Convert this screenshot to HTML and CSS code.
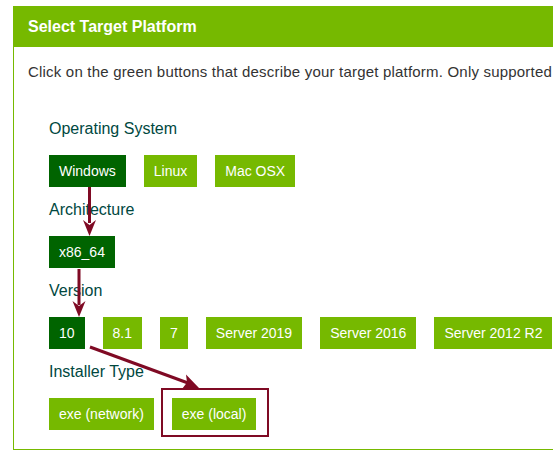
FILE: index.html
```html
<!DOCTYPE html>
<html lang="en">
<head>
<meta charset="utf-8">
<title>Select Target Platform</title>
<link rel="stylesheet" href="styles.css">
</head>
<body>
<div class="page">
  <div class="panel">
    <div class="panel-head">Select Target Platform</div>
    <div class="panel-body">
      <p class="intro">Click on the green buttons that describe your target platform. Only supported platforms will be shown.</p>
      <div class="sections">
        <div class="section">
          <div class="label">Operating System</div>
          <div class="btn-row">
            <span class="btn selected">Windows</span>
            <span class="btn">Linux</span>
            <span class="btn">Mac OSX</span>
          </div>
        </div>
        <div class="section">
          <div class="label">Architecture</div>
          <div class="btn-row">
            <span class="btn selected">x86_64</span>
          </div>
        </div>
        <div class="section">
          <div class="label">Version</div>
          <div class="btn-row">
            <span class="btn selected">10</span>
            <span class="btn">8.1</span>
            <span class="btn">7</span>
            <span class="btn">Server 2019</span>
            <span class="btn">Server 2016</span>
            <span class="btn">Server 2012 R2</span>
          </div>
        </div>
        <div class="section">
          <div class="label">Installer Type</div>
          <div class="btn-row">
            <span class="btn">exe (network)</span>
            <span class="btn highlight">exe (local)</span>
          </div>
        </div>
      </div>
    </div>
  </div>
</div>
<svg class="arrows" width="553" height="456" viewBox="0 0 553 456" aria-hidden="true">
  <g fill="#7f0a24" stroke="none">
    <rect x="88" y="187" width="3" height="36"/>
    <polygon points="89.5,236 83,220 89.5,225 96,220"/>
    <rect x="77.5" y="269" width="3" height="36"/>
    <polygon points="79,317 72.5,301 79,306 85.5,301"/>
  </g>
  <line x1="90" y1="347" x2="188" y2="383" stroke="#7f0a24" stroke-width="3"/>
  <polygon fill="#7f0a24" points="199,388 182,389 187,382.5 186,374.5"/>
</svg>
</body>
</html>
```

FILE: styles.css
```css
html, body {
  margin: 0;
  padding: 0;
  width: 553px;
  height: 456px;
  overflow: hidden;
  background: #ffffff;
}

body {
  position: relative;
  font-family: "Liberation Sans", Arial, sans-serif;
  color: #333333;
}

.page {
  padding: 6px 0 0 13px;
}

.panel {
  width: 640px;
  border: 1px solid #76b900;
}

.panel-head {
  background: #76b900;
  height: 40px;
  line-height: 40px;
  padding-left: 14px;
  color: #ffffff;
  font-size: 16px;
  font-weight: bold;
}

.panel-body {
  padding: 15px 0 19px 14px;
}

.intro {
  margin: 0 0 37px 0;
  font-size: 15px;
  letter-spacing: 0.2px;
  line-height: 20px;
  white-space: nowrap;
  color: #333333;
}

.sections {
  padding-left: 21px;
}

.section + .section {
  margin-top: 13px;
}

.label {
  font-size: 16px;
  line-height: 20px;
  color: #00483f;
  margin-bottom: 16px;
}

.btn-row {
  display: flex;
  gap: 18px;
}

.btn {
  display: block;
  height: 32px;
  line-height: 32px;
  padding: 0 10px;
  font-size: 14px;
  color: #ffffff;
  background: #76b900;
  white-space: nowrap;
}

.btn.selected {
  background: #006400;
}

.btn.highlight {
  position: relative;
}

.btn.highlight::after {
  content: "";
  position: absolute;
  top: -10px;
  left: -11px;
  right: -13px;
  bottom: -7px;
  border: 2px solid #7f0a24;
}

.arrows {
  position: absolute;
  top: 0;
  left: 0;
  pointer-events: none;
}
```
